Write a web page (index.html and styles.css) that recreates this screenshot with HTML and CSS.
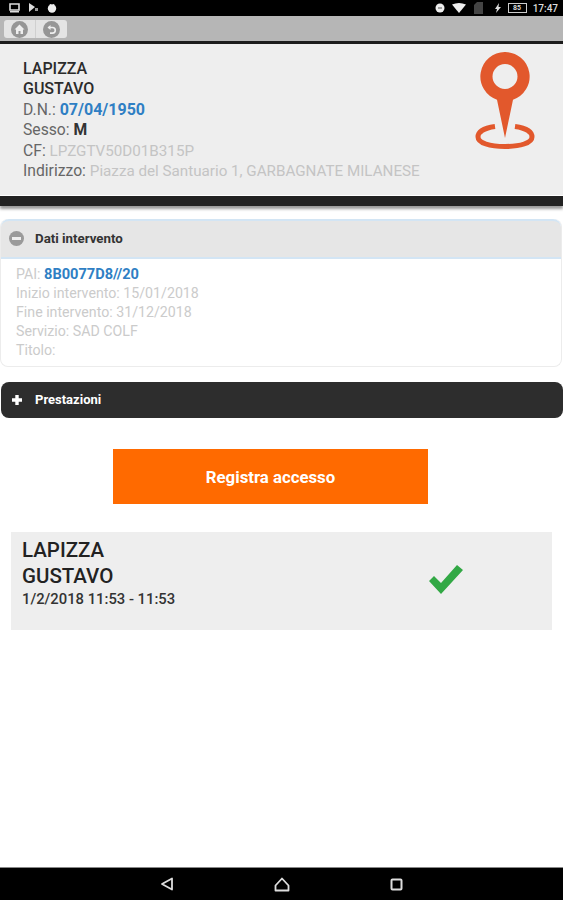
FILE: index.html
```html
<!DOCTYPE html>
<html lang="it">
<head>
  <meta charset="UTF-8" />
  <meta name="viewport" content="width=device-width, initial-scale=1.0"/>
  <title>Dati intervento</title>
  <link rel="stylesheet" href="styles.css">
</head>
<body>
  <div class="statusbar">
    <div class="status-left">
      <svg width="11" height="10" viewBox="0 0 11 10"><path d="M1 1h9v6H1z" fill="none" stroke="#ddd" stroke-width="1.6"/><path d="M1 8h9v1.5H1z" fill="#ddd"/></svg>
      <svg width="11" height="10" viewBox="0 0 11 10"><path d="M1 0l6 4-6 5z" fill="#ddd"/><path d="M7 5h3v3H7z" fill="#999"/></svg>
      <svg width="10" height="10" viewBox="0 0 10 10"><circle cx="5" cy="5.5" r="4.2" fill="#eee"/><path d="M3 1l1 2M7 1L6 3" stroke="#eee"/></svg>
    </div>
    <div class="status-right">
      <svg width="10" height="10" viewBox="0 0 10 10"><circle cx="5" cy="5" r="4.5" fill="#eee"/><path d="M3 5h4" stroke="#555"/></svg>
      <svg class="wifi" width="14" height="10" viewBox="0 0 14 10"><path d="M0 1.5Q7-1.500 14 1.500L7 10z" fill="#eee"/></svg>
      <svg class="sim" width="9" height="12" viewBox="0 0 9 12"><path d="M0 12V3l3-3h6v12z" fill="#444"/></svg>
      <svg class="bolt" width="6" height="10" viewBox="0 0 6 10"><path d="M4 0L0 6h2l-1 4 5-6H3.500z" fill="#ddd"/></svg>
      <span class="battery"><span class="battery-level">85</span></span>
      <span class="clock">17:47</span>
    </div>
  </div>

  <div class="toolbar">
    <div class="toolbar-buttons">
      <span class="tool-btn">
        <svg width="17" height="17" viewBox="0 0 17 17"><circle cx="8.500" cy="8.500" r="8.500" fill="#969696"/><path d="M8.500 3.500L3.500 8.500H5v4.500h2.500v-3h2v3H12V8.500h1.500z" fill="#eee"/></svg>
      </span>
      <span class="tool-btn">
        <svg width="17" height="17" viewBox="0 0 17 17"><circle cx="8.500" cy="8.500" r="8.500" fill="#969696"/><path d="M5.500 6.500h4a2.800 2.800 0 0 1 0 5.600H7" fill="none" stroke="#eee" stroke-width="1.600"/><path d="M7.500 4L4.500 6.500 7.500 9z" fill="#eee"/></svg>
      </span>
    </div>
  </div>

  <header class="patient">
    <div class="patient-info">
      <div class="name">LAPIZZA</div>
      <div class="name">GUSTAVO</div>
      <div>D.N.: <b class="blue">07/04/1950</b></div>
      <div>Sesso: <b class="dark">M</b></div>
      <div>CF: <span class="faded">LPZGTV50D01B315P</span></div>
      <div>Indirizzo: <span class="faded">Piazza del Santuario 1, GARBAGNATE MILANESE</span></div>
    </div>
    <svg class="pin" width="62" height="98" viewBox="0 0 62 98">
      <path fill-rule="evenodd" d="M31 0a24.500 24.500 0 0 1 8 47.700L31 86l-8-38.300A24.500 24.500 0 0 1 31 0zm0 12a12.500 12.500 0 1 0 0 25 12.500 12.500 0 0 0 0-25z" fill="#e2582c"/>
      <path d="M21 74.500C10 76 4 80 4 85c0 6 12 9.500 27 9.500S58 91 58 85c0-5-6-9-17-10.500" fill="none" stroke="#e2582c" stroke-width="5"/>
    </svg>
  </header>
  <div class="patient-band"></div>

  <section class="panel">
    <div class="panel-head">
      <span class="round-icon"><span class="minus"></span></span>
      <span>Dati intervento</span>
    </div>
    <div class="panel-body">
      <div>PAI: <b class="blue-small">8B0077D8//20</b></div>
      <div>Inizio intervento: 15/01/2018</div>
      <div>Fine intervento: 31/12/2018</div>
      <div>Servizio: SAD COLF</div>
      <div>Titolo:</div>
    </div>
  </section>

  <section class="panel-closed">
    <svg width="12" height="12" viewBox="0 0 12 12"><path d="M4.300 1h3.400v3.300H11v3.400H7.700V11H4.300V7.700H1V4.300h3.300z" fill="#fff"/></svg>
    <span>Prestazioni</span>
  </section>

  <div class="action">
    <button class="register">Registra accesso</button>
  </div>

  <div class="access-card">
    <div>
      <div class="access-name">LAPIZZA</div>
      <div class="access-name">GUSTAVO</div>
      <div class="access-time">1/2/2018 11:53 - 11:53</div>
    </div>
    <svg class="check" width="34" height="29" viewBox="0 0 34 29"><path d="M0 16l5-5 7 7L28 0l6 5-22 24z" fill="#32a845"/></svg>
  </div>

  <nav class="navbar">
    <svg width="14" height="14" viewBox="0 0 14 14"><path d="M12 1.500v11L2 7z" fill="none" stroke="#ddd" stroke-width="1.800" stroke-linejoin="round"/></svg>
    <svg width="16" height="15" viewBox="0 0 16 15"><path d="M8 1.500L1.500 8.500v5h13v-5z" fill="none" stroke="#ddd" stroke-width="1.800" stroke-linejoin="round"/></svg>
    <svg width="13" height="13" viewBox="0 0 13 13"><rect x="1.500" y="1.500" width="10" height="10" rx="1" fill="none" stroke="#ddd" stroke-width="2"/></svg>
  </nav>
</body>
</html>
```

FILE: styles.css
```css
* {
  box-sizing: border-box;
}

html, body {
  height: 100%;
}

body {
  margin: 0;
  height: 900px;
  display: flex;
  flex-direction: column;
  font-family: Roboto, 'Liberation Sans', sans-serif;
  background-color: #fff;
  color: #333;
  overflow: hidden;
}

.statusbar {
  height: 16px;
  background-color: #000;
  display: flex;
  justify-content: space-between;
  align-items: center;
  padding: 0 5px 0 9px;
}

.status-left, .status-right {
  display: flex;
  align-items: center;
  gap: 8px;
}

.status-right {
  gap: 6px;
}

.wifi {
  margin: 0 2px 0 1px;
}

.sim {
  margin-right: 6px;
}

.bolt {
  margin-right: 1px;
}

.battery {
  width: 19px;
  height: 10px;
  border: 1px solid #ccc;
  display: flex;
  align-items: center;
  justify-content: center;
}

.battery-level {
  font-size: 7px;
  font-weight: 700;
  color: #ddd;
}

.clock {
  font-size: 10px;
  font-weight: 500;
  color: #ddd;
}

.toolbar {
  height: 25px;
  background-color: #b6b6b6;
  padding: 4px 0 0 4px;
  border-bottom: 0;
}

.toolbar-buttons {
  width: 63px;
  height: 18px;
  display: flex;
  background-color: #e4e4e4;
  border-radius: 3px;
}

.tool-btn {
  width: 32px;
  display: flex;
  align-items: center;
  justify-content: center;
  border-right: 1px solid #d0d0d0;
}

.tool-btn:last-child {
  border-right: none;
}

.patient {
  height: 155px;
  background-color: #eee;
  border-top: 3px solid #1c1c1c;
  display: flex;
  justify-content: space-between;
  padding: 15px 27px 0 23px;
  border-bottom: 1px solid #fff;
}

.patient-info {
  font-size: 15.700px;
  line-height: 20.400px;
  color: #666;
}

.name {
  font-size: 16px;
  font-weight: 500;
  color: #2b2b2b;
}

.blue {
  font-size: 16px;
  font-weight: 700;
  color: #2f7fc4;
}

.blue-small {
  font-size: 14.600px;
  font-weight: 700;
  color: #2f7fc4;
}

.dark {
  font-weight: 700;
  color: #333;
}

.faded {
  font-size: 15.200px;
  color: #c4c4c4;
}

.pin {
  flex-shrink: 0;
  margin-top: -7px;
}

.patient-band {
  height: 10px;
  background-color: #222;
  box-shadow: 0 3px 3px rgba(0, 0, 0, 0.4);
  margin-bottom: 13px;
}

.panel {
  border-radius: 8px 8px 8px 8px;
  border: 1px solid #ececec;
  border-top: none;
  margin-right: 1px;
  background-color: #fff;
}

.panel-head {
  height: 40px;
  background-color: #e6e6e6;
  border-top: 2px solid #d3e5f4;
  border-bottom: 2px solid #d3e5f4;
  border-radius: 8px 8px 0 0;
  display: flex;
  align-items: center;
  gap: 11px;
  padding: 0 0 2px 8px;
  font-size: 13.300px;
  font-weight: 700;
  color: #333;
}

.round-icon {
  width: 15px;
  height: 15px;
  border-radius: 50%;
  background-color: #9a9a9a;
  display: flex;
  align-items: center;
  justify-content: center;
}

.minus {
  width: 9px;
  height: 3px;
  background-color: #eee;
}

.panel-body {
  height: 107px;
  padding: 6px 0 0 15px;
  font-size: 14.200px;
  line-height: 19px;
  color: #cbcbcb;
}

.panel-closed {
  height: 36px;
  margin: 15px 0 0 1px;
  background-color: #2d2d2d;
  border-radius: 8px;
  display: flex;
  align-items: center;
  gap: 12px;
  padding: 0 0 1px 10px;
  font-size: 13px;
  font-weight: 700;
  color: #fff;
}

.action {
  display: flex;
  padding: 31px 0 0 113px;
}

.register {
  width: 315px;
  height: 55px;
  border: none;
  background-color: #ff6a00;
  color: #fff;
  font-family: inherit;
  font-size: 16.800px;
  font-weight: 700;
}

.access-card {
  width: 541px;
  height: 98px;
  margin: 28px 0 0 11px;
  background-color: #eee;
  display: flex;
  justify-content: space-between;
  padding: 5px 89px 0 11px;
}

.access-name {
  font-size: 20.500px;
  line-height: 26px;
  font-weight: 500;
  color: #222;
}

.access-time {
  font-size: 14.800px;
  line-height: 20px;
  font-weight: 500;
  color: #333;
}

.check {
  margin-top: 28px;
}

.navbar {
  margin-top: auto;
  height: 33px;
  background-color: #000;
  border-top: 1px solid #888;
  display: flex;
  align-items: center;
  justify-content: center;
  gap: 100px;
  padding-right: 1px;
}
```
